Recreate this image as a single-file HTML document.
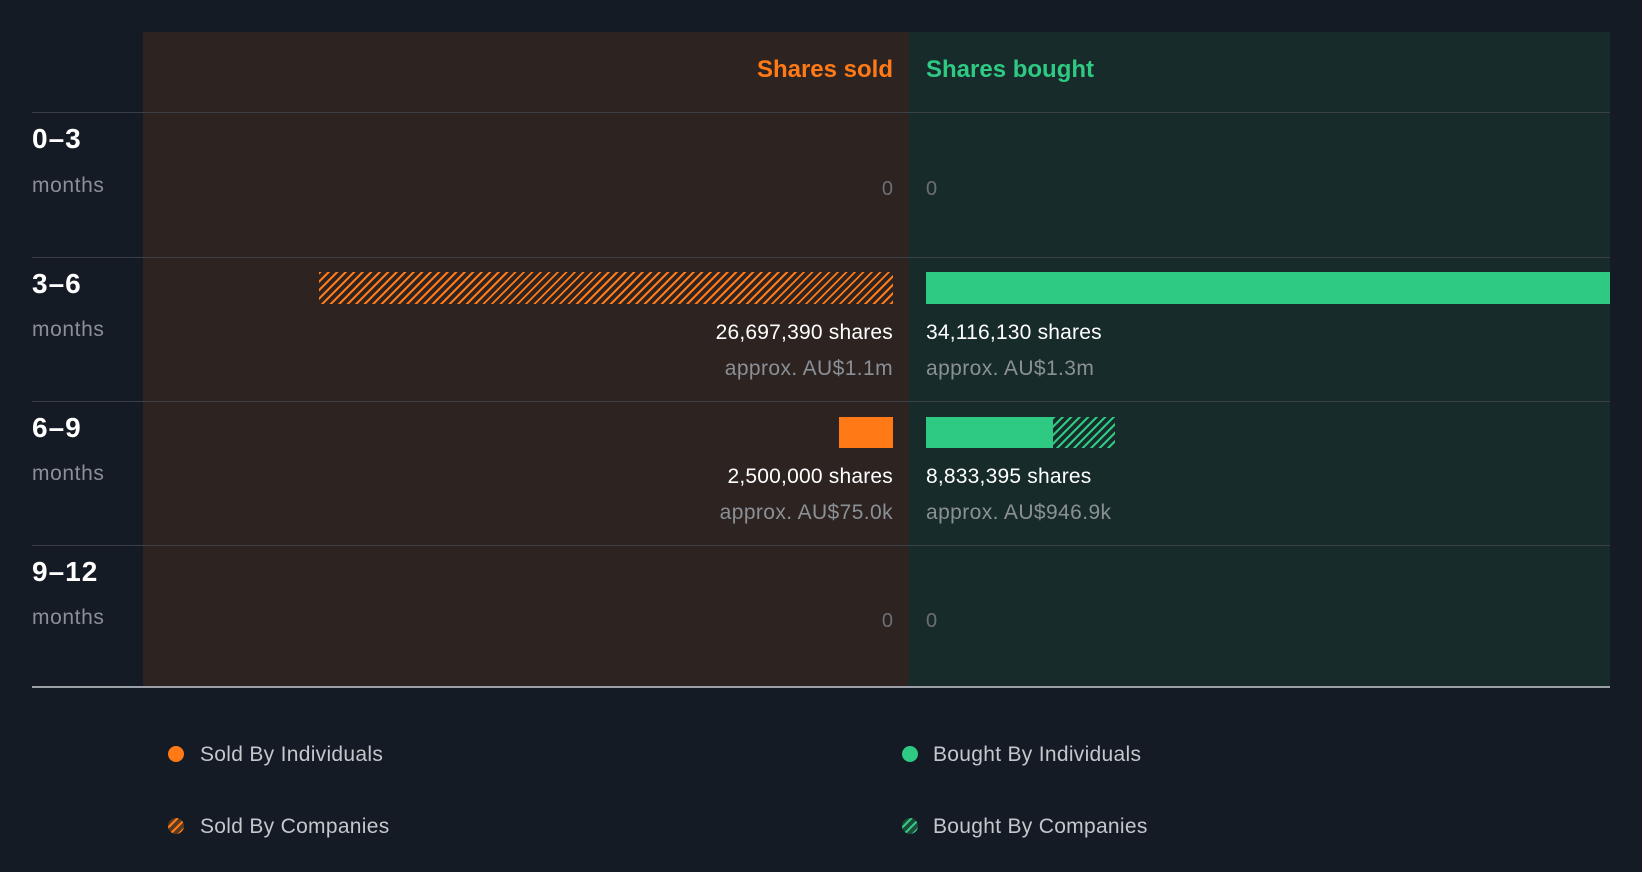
<!DOCTYPE html>
<html><head><style>
*{margin:0;padding:0;box-sizing:border-box}
body{width:1642px;height:872px;background:#141b24;position:relative;overflow:hidden;font-family:"Liberation Sans",Arial,sans-serif}
.a{position:absolute}
.hl{background:repeating-linear-gradient(135deg,#ff7a16 0 2px,transparent 2px 6px)}
.hg{background:repeating-linear-gradient(135deg,#2ec982 0 2px,transparent 2px 6px)}
.line{position:absolute;left:32px;width:1578px;height:1px;background:#3a3f44}
.lab{position:absolute;left:32px;color:#fff;font-weight:bold;font-size:28px;letter-spacing:1px}
.mo{position:absolute;left:32px;color:#8b9096;font-size:21px;letter-spacing:0.6px}
.z{position:absolute;font-size:20px;color:#6c7075}
.r{text-align:right;right:749px}
.l{left:926px}
.w{position:absolute;font-size:21px;color:#fff;letter-spacing:0.2px}
.g{position:absolute;font-size:21px;color:#8b9096;letter-spacing:0.4px}
.lg{position:absolute;font-size:21px;color:#c4c7cb;letter-spacing:0.3px}
.dot{position:absolute;width:16px;height:16px;border-radius:50%}
</style></head><body>
<div class="a" style="left:143px;top:32px;width:766px;height:655px;background:#2d2321"></div>
<div class="a" style="left:909px;top:32px;width:701px;height:655px;background:#172b2b"></div>
<div class="a" style="right:749px;top:56px;color:#ff7a16;font-weight:bold;font-size:24px">Shares sold</div>
<div class="a" style="left:926px;top:56px;color:#2ec982;font-weight:bold;font-size:24px">Shares bought</div>
<div class="line" style="top:112px"></div>
<div class="line" style="top:257px"></div>
<div class="line" style="top:401px"></div>
<div class="line" style="top:545px"></div>
<div class="line" style="top:686px;height:2px;background:#9aa0a6"></div>

<div class="lab" style="top:123px">0–3</div><div class="mo" style="top:174px">months</div>
<div class="lab" style="top:268px">3–6</div><div class="mo" style="top:318px">months</div>
<div class="lab" style="top:412px">6–9</div><div class="mo" style="top:462px">months</div>
<div class="lab" style="top:556px">9–12</div><div class="mo" style="top:606px">months</div>

<div class="z r" style="top:178px">0</div><div class="z l" style="top:178px">0</div>
<div class="z r" style="top:610px">0</div><div class="z l" style="top:610px">0</div>

<div class="a hl" style="left:319px;top:272px;width:574px;height:32px"></div>
<div class="a" style="left:926px;top:272px;width:684px;height:32px;background:#2ec982"></div>
<div class="w r" style="top:321px">26,697,390 shares</div>
<div class="g r" style="top:357px">approx. AU$1.1m</div>
<div class="w l" style="top:321px">34,116,130 shares</div>
<div class="g l" style="top:357px">approx. AU$1.3m</div>

<div class="a" style="left:839px;top:417px;width:54px;height:31px;background:#ff7a16"></div>
<div class="a" style="left:926px;top:417px;width:127px;height:31px;background:#2ec982"></div>
<div class="a hg" style="left:1053px;top:417px;width:62px;height:31px"></div>
<div class="w r" style="top:465px">2,500,000 shares</div>
<div class="g r" style="top:501px">approx. AU$75.0k</div>
<div class="w l" style="top:465px">8,833,395 shares</div>
<div class="g l" style="top:501px">approx. AU$946.9k</div>

<div class="dot" style="left:168px;top:746px;background:#ff7a16"></div>
<div class="lg" style="left:200px;top:743px">Sold By Individuals</div>
<div class="dot hl" style="left:168px;top:818px;background-color:#5a3a20"></div>
<div class="lg" style="left:200px;top:815px">Sold By Companies</div>
<div class="dot" style="left:902px;top:746px;background:#2ec982"></div>
<div class="lg" style="left:933px;top:743px">Bought By Individuals</div>
<div class="dot hg" style="left:902px;top:818px;background-color:#1d4a3a"></div>
<div class="lg" style="left:933px;top:815px">Bought By Companies</div>
</body></html>
